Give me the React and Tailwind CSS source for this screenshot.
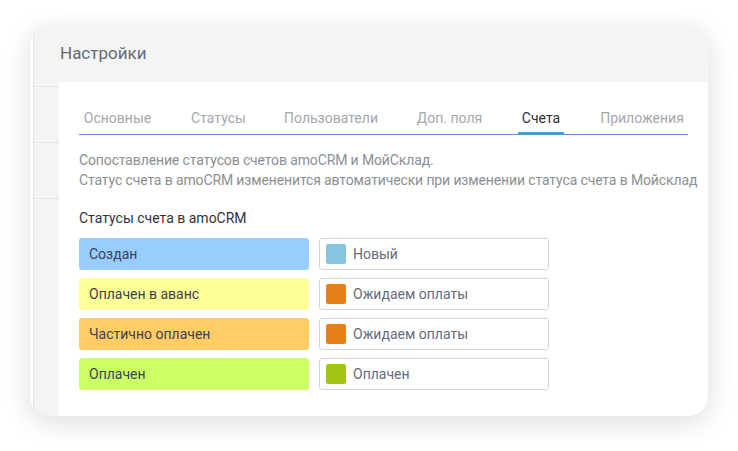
const tabs = [
  { label: "Основные", w: "w-[77px]" },
  { label: "Статусы", w: "w-[61px]" },
  { label: "Пользователи", w: "w-[100px]" },
  { label: "Доп. поля", w: "w-[73px]" },
  { label: "Счета", w: "w-[46px]", active: true },
  { label: "Приложения", w: "w-[92px]" },
];

const rows = [
  { amo: "Создан", amoBg: "bg-[#99ccff]", ms: "Новый", msColor: "bg-[#87c6de]" },
  { amo: "Оплачен в аванс", amoBg: "bg-[#ffff99]", ms: "Ожидаем оплаты", msColor: "bg-[#e67f17]" },
  { amo: "Частично оплачен", amoBg: "bg-[#ffcc66]", ms: "Ожидаем оплаты", msColor: "bg-[#e67f17]" },
  { amo: "Оплачен", amoBg: "bg-[#ccff66]", ms: "Оплачен", msColor: "bg-[#a3c616]" },
];

export default function App() {
  return (
    <div className="w-[738px] h-[451px] bg-white overflow-hidden pt-[26px] pl-[30px] font-['Roboto',sans-serif]">
      <div className="w-[678px] h-[390px] rounded-[20px] bg-[#f4f4f4] shadow-[0_6px_28px_rgba(0,0,0,0.14)] overflow-hidden flex">
        {/* left sidebar edge */}
        <div className="w-[29px] shrink-0 border-l-[3px] border-white">
          <div className="h-full border-l border-[#e4e4e4]">
            <div className="h-[61px] border-b border-[#e4e4e4]" />
            <div className="h-[56px] border-b border-[#e4e4e4]" />
            <div className="h-[56px] border-b border-[#e4e4e4]" />
          </div>
        </div>

        <div className="flex-1 min-w-0 flex flex-col">
          <div className="h-[56px] flex items-center pl-[1px]">
            <h1 className="text-[17px] text-[#646b75]">Настройки</h1>
          </div>

          <div className="flex-1 bg-white px-[20px] pt-[26px]">
            <div className="flex gap-[32px] w-fit border-b border-[#5b8edb]">
              {tabs.map((t) => (
                <div
                  key={t.label}
                  className={`relative ${t.w} h-[26px] text-center text-[14px] leading-[20px] whitespace-nowrap ${
                    t.active ? "text-[#2b2f35]" : "text-[#a3a8ad]"
                  }`}
                >
                  {t.label}
                  {t.active && (
                    <span className="absolute left-0 right-0 -bottom-px h-[3px] bg-[#3fa0d8]" />
                  )}
                </div>
              ))}
            </div>

            <div className="mt-[15px] text-[14px] leading-[20px] tracking-[-0.13px] text-[#8b8f94] whitespace-nowrap">
              <p>Сопоставление статусов счетов amoCRM и МойСклад.</p>
              <p>Статус счета в amoCRM измененится автоматически при изменении статуса счета в Мойсклад</p>
            </div>

            <div className="mt-[18px] text-[14px] leading-[20px] text-[#2f343b]">Статусы счета в amoCRM</div>

            <div className="mt-[10px] flex flex-col gap-[8px]">
              {rows.map((r, i) => (
                <div key={i} className="flex gap-[10px]">
                  <div className={`w-[230px] h-[32px] rounded-[3px] ${r.amoBg} flex items-center pl-[10px] text-[14px] text-[#3b4250]`}>
                    {r.amo}
                  </div>
                  <div className="w-[230px] h-[32px] rounded-[3px] border border-[#d6d6d6] flex items-center pl-[6px] gap-[7px] text-[14px] text-[#656b78]">
                    <span className={`w-[20px] h-[20px] rounded-[2px] ${r.msColor}`} />
                    {r.ms}
                  </div>
                </div>
              ))}
            </div>
          </div>
        </div>
      </div>
    </div>
  );
}
